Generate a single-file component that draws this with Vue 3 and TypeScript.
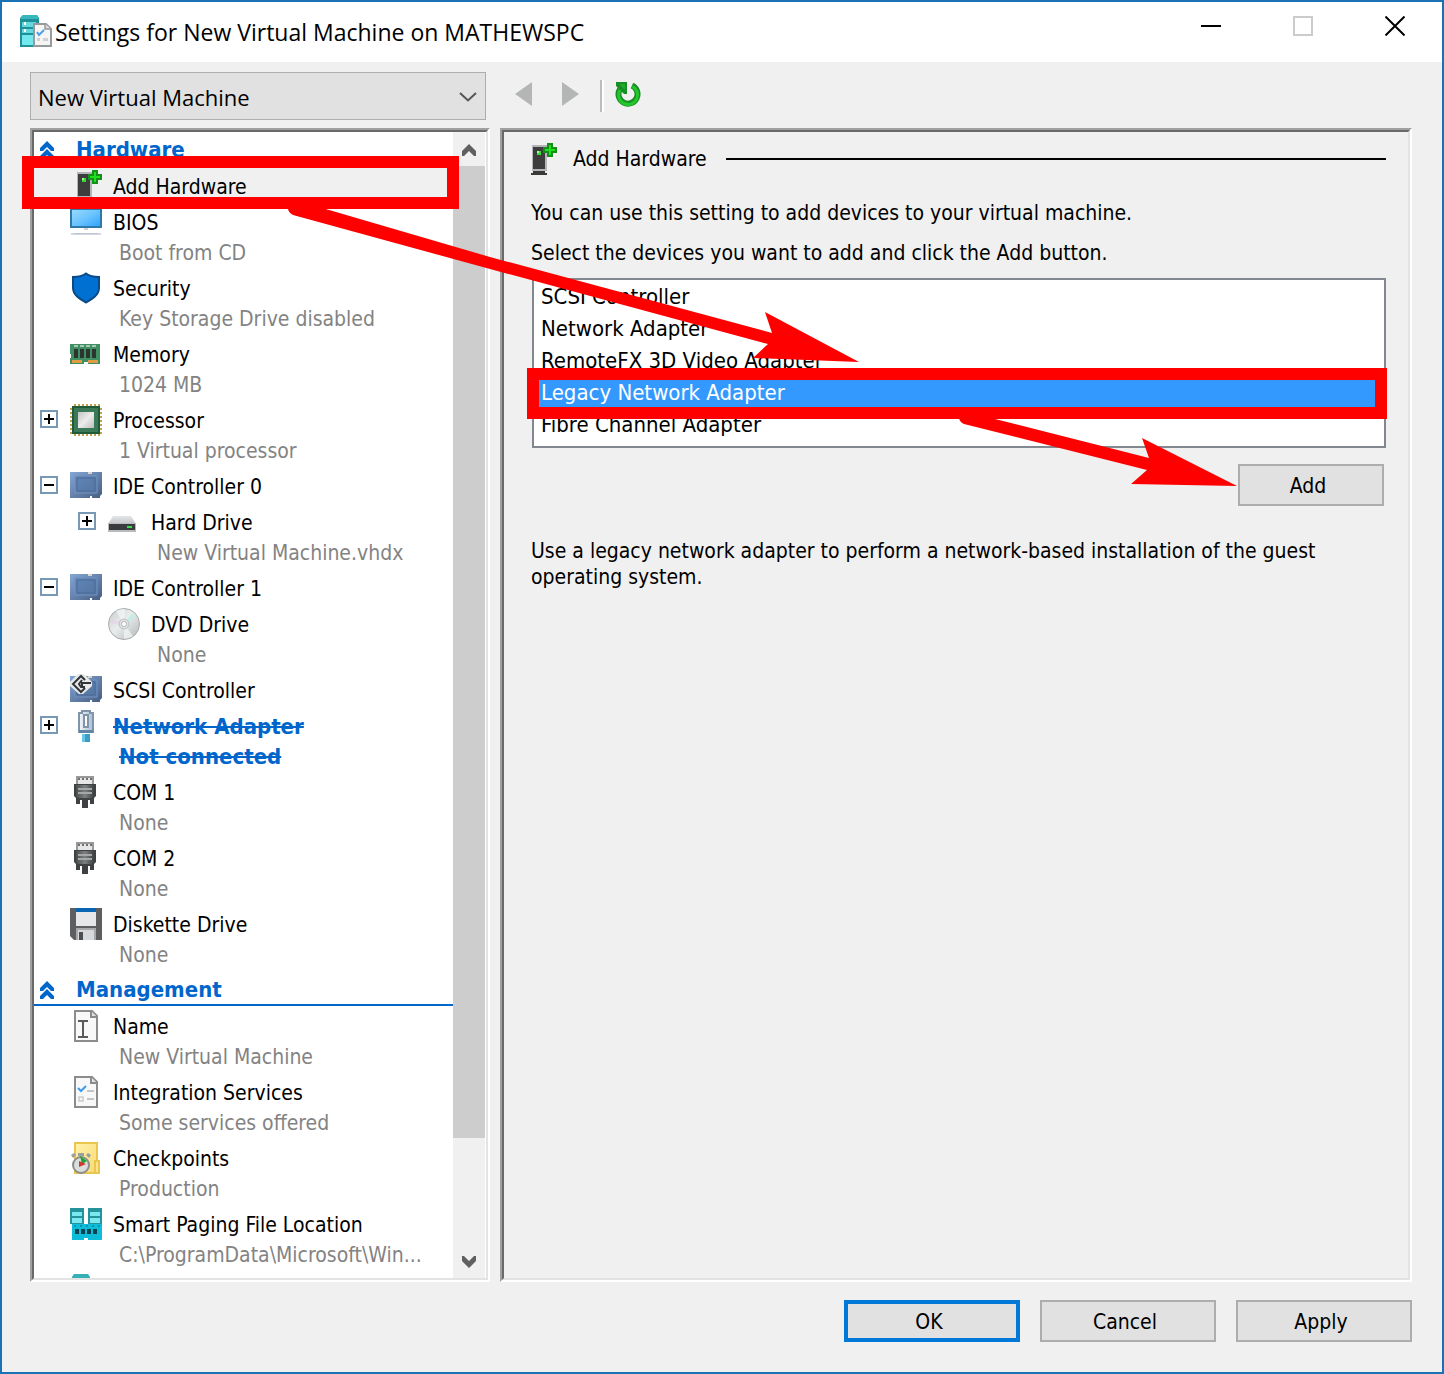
<script setup lang="ts">
import { ref } from 'vue'

interface TreeNode {
  icon: string
  name: string
  detail?: string
  level?: number
  toggle?: 'plus' | 'minus'
  changed?: boolean
}

interface Section {
  title: string
  nodes: TreeNode[]
}

const sections: Section[] = [
  {
    title: 'Hardware',
    nodes: [
      { icon: 'add-hardware', name: 'Add Hardware' },
      { icon: 'bios', name: 'BIOS', detail: 'Boot from CD' },
      { icon: 'security', name: 'Security', detail: 'Key Storage Drive disabled' },
      { icon: 'memory', name: 'Memory', detail: '1024 MB' },
      { icon: 'processor', name: 'Processor', detail: '1 Virtual processor', toggle: 'plus' },
      { icon: 'ide', name: 'IDE Controller 0', toggle: 'minus' },
      { icon: 'hard-drive', name: 'Hard Drive', detail: 'New Virtual Machine.vhdx', level: 2, toggle: 'plus' },
      { icon: 'ide', name: 'IDE Controller 1', toggle: 'minus' },
      { icon: 'dvd', name: 'DVD Drive', detail: 'None', level: 2 },
      { icon: 'scsi', name: 'SCSI Controller' },
      { icon: 'network', name: 'Network Adapter', detail: 'Not connected', toggle: 'plus', changed: true },
      { icon: 'com', name: 'COM 1', detail: 'None' },
      { icon: 'com', name: 'COM 2', detail: 'None' },
      { icon: 'diskette', name: 'Diskette Drive', detail: 'None' },
    ],
  },
  {
    title: 'Management',
    nodes: [
      { icon: 'name', name: 'Name', detail: 'New Virtual Machine' },
      { icon: 'services', name: 'Integration Services', detail: 'Some services offered' },
      { icon: 'checkpoints', name: 'Checkpoints', detail: 'Production' },
      { icon: 'paging', name: 'Smart Paging File Location', detail: 'C:\\ProgramData\\Microsoft\\Win...' },
      { icon: 'server', name: '' },
    ],
  },
]

const devices = [
  'SCSI Controller',
  'Network Adapter',
  'RemoteFX 3D Video Adapter',
  'Legacy Network Adapter',
  'Fibre Channel Adapter',
]

const machine = ref('New Virtual Machine')
const currentNode = ref('Add Hardware')
const currentDevice = ref('Legacy Network Adapter')
</script>

<template>
  <div class="window">
    <svg class="sprite" aria-hidden="true">
      <defs>
        <linearGradient id="g-screen" x1="0" y1="0" x2="1" y2="1">
          <stop offset="0" stop-color="#9bdcff" />
          <stop offset="0.5" stop-color="#6cc4ff" />
          <stop offset="1" stop-color="#2ba2fb" />
        </linearGradient>
        <linearGradient id="g-chip" x1="0" y1="0" x2="1" y2="1">
          <stop offset="0" stop-color="#c4c4c4" />
          <stop offset="0.5" stop-color="#ececec" />
          <stop offset="1" stop-color="#bdbdbd" />
        </linearGradient>
        <linearGradient id="g-card" x1="0" y1="0" x2="1" y2="1">
          <stop offset="0" stop-color="#84a7d4" />
          <stop offset="1" stop-color="#465d82" />
        </linearGradient>
        <linearGradient id="g-card-core" x1="0" y1="0" x2="1" y2="1">
          <stop offset="0" stop-color="#5f86b8" />
          <stop offset="1" stop-color="#56749f" />
        </linearGradient>
        <linearGradient id="g-disc" x1="0" y1="0" x2="1" y2="1">
          <stop offset="0" stop-color="#c9cccc" />
          <stop offset="0.45" stop-color="#e9eded" />
          <stop offset="1" stop-color="#b4b6b6" />
        </linearGradient>
        <linearGradient id="g-drive" x1="0" y1="0" x2="0" y2="1">
          <stop offset="0" stop-color="#e4e5e7" />
          <stop offset="1" stop-color="#c2c4c7" />
        </linearGradient>
        <linearGradient id="g-plug" x1="0" y1="0" x2="1" y2="0">
          <stop offset="0" stop-color="#4c4f50" />
          <stop offset="0.5" stop-color="#7d7f81" />
          <stop offset="1" stop-color="#3e4142" />
        </linearGradient>
        <linearGradient id="g-rj" x1="0" y1="0" x2="1" y2="0">
          <stop offset="0" stop-color="#f3f6f9" />
          <stop offset="1" stop-color="#a9bfd6" />
        </linearGradient>
        <linearGradient id="g-folder" x1="0" y1="0" x2="1" y2="1">
          <stop offset="0" stop-color="#fff2a8" />
          <stop offset="1" stop-color="#f9d978" />
        </linearGradient>
      </defs>

      <symbol id="add-hardware" viewBox="0 0 32 32">
        <rect x="7" y="2" width="15" height="26" fill="#b5b5b9" />
        <rect x="8" y="4" width="12" height="22" fill="#3d3d3d" />
        <rect x="12" y="8" width="4" height="4" fill="#2fe02f" />
        <rect x="12" y="8" width="2" height="2" fill="#a4ffa0" />
        <rect x="8" y="28" width="12" height="2" fill="#3c3a36" />
        <rect x="6" y="30" width="16" height="2" fill="#3c3a36" />
        <path d="M22 0h6v4h4v6h-4v4h-6v-4h-4V4h4z" fill="#12901a" />
        <path d="M24 2h2v4h4v2h-4v4h-2V8h-4V6h4z" fill="#1fe01f" />
      </symbol>

      <symbol id="bios" viewBox="0 0 32 32">
        <rect x="1" y="3" width="30" height="18" fill="url(#g-screen)" stroke="#2f78a8" stroke-width="2" />
        <rect x="14" y="22" width="4" height="2" fill="#cdd3d9" />
        <rect x="1" y="27" width="30" height="2" fill="#d3d9e4" />
        <rect x="4" y="27" width="24" height="1" fill="#bcc3ce" />
      </symbol>

      <symbol id="security" viewBox="0 0 32 32">
        <path d="M16 1.500C12 4.500 8 5 3 5v11c0 7 7 11 13 14.500C22 27 29 23 29 16V5C24 5 20 4.500 16 1.500z" fill="#0070d2" stroke="#0a4a85" stroke-width="2" />
      </symbol>

      <symbol id="memory" viewBox="0 0 32 32">
        <path d="M0 6h30v20H18v-2h-4v2H0v-6h1v-4H0z" fill="#3f8f63" />
        <path d="M4 7h4v2H4zM10 7h4v2h-4zM16 7h4v2h-4zM22 7h4v2h-4z" fill="#a9c9b6" />
        <path d="M4 11h4v9H4zM10 11h4v9h-4zM16 11h4v9h-4zM22 11h4v9h-4z" fill="#2b3431" />
        <path d="M2 22h10v3H2zM18 22h10v3H18z" fill="#df9c42" />
      </symbol>

      <symbol id="processor" viewBox="0 0 32 32">
        <path d="M4 1h26M4 31h26" stroke="#c2a14c" stroke-width="2" stroke-dasharray="2 2" />
        <path d="M1 4v26M31 4v26" stroke="#c2a14c" stroke-width="2" stroke-dasharray="2 2" />
        <rect x="3" y="3" width="26" height="26" fill="#3b7857" stroke="#1f5b3b" stroke-width="2" />
        <rect x="8" y="8" width="16" height="16" fill="url(#g-chip)" />
      </symbol>

      <symbol id="ide" viewBox="0 0 32 32">
        <path d="M0 2h32v22l-2 2v2h-8v-2h-2v2H0z" fill="url(#g-card)" />
        <path d="M18 2h4v2h-4z" fill="#d8d5cc" />
        <path d="M5 6h22v17H5z" fill="url(#g-card-core)" stroke="#7393be" stroke-width="1" />
        <path d="M7 8h18v13H7z" fill="none" stroke="#4b6a97" stroke-width="1" />
      </symbol>

      <symbol id="scsi" viewBox="0 0 32 32">
        <use href="#ide" />
        <path d="M8 0h6l8 8v4l-9 8H9l-9-8V8z" fill="#e9e9e7" />
        <path d="M15 6l-4-4-8 8 8 8 4-4M21 9h-9v4M15 13h-4l-2-3 3-4" fill="none" stroke="#30353b" stroke-width="2" />
      </symbol>

      <symbol id="hard-drive" viewBox="0 0 32 32">
        <path d="M5 10h18l5 8H0z" fill="url(#g-drive)" />
        <rect x="0" y="17" width="28" height="9" fill="#b9bbbd" />
        <rect x="1" y="18" width="26" height="6" fill="#3a3b3c" />
        <rect x="19" y="20" width="5" height="2" fill="#34e04e" />
      </symbol>

      <symbol id="dvd" viewBox="0 0 32 32">
        <circle cx="16" cy="16" r="15.500" fill="url(#g-disc)" stroke="#a9abab" />
        <path d="M16 16L8 3a15 15 0 0 1 9-2zM16 16l9 12a15 15 0 0 1-9 3z" fill="#f4f7f7" opacity="0.700" />
        <path d="M18 13l6-8 3 3-7 7z" fill="#b6f0e4" opacity="0.700" />
        <path d="M3 11l9 3v3l-10-2z" fill="#eccdea" opacity="0.500" />
        <circle cx="16" cy="16" r="5" fill="#dfe0e0" stroke="#c1c3c3" />
        <circle cx="16" cy="16" r="2.500" fill="#fff" stroke="#b6b8b8" />
      </symbol>

      <symbol id="network" viewBox="0 0 32 32">
        <path d="M9 3h3V1h8v2h3v19H9z" fill="url(#g-rj)" stroke="#8195aa" stroke-width="2" />
        <path d="M14 5h4v12h-4z" fill="#fff" stroke="#8195aa" stroke-width="2" />
        <path d="M9 20h14v3H9z" fill="#5f84a8" />
        <path d="M12 24h8v8h-8z" fill="#3b9cc7" />
        <path d="M12 24h3v8h-3z" fill="#67c6e4" />
      </symbol>

      <symbol id="com" viewBox="0 0 32 32">
        <path d="M6 0h18v8H6z" fill="#98999b" />
        <path d="M8 2h14v6H8z" fill="#e6e6e6" />
        <path d="M8 2h2v2H8zM12 2h2v2h-2zM16 2h2v2h-2zM20 2h2v2h-2z" fill="#6f7072" />
        <path d="M4 8h22v12l-2 2v6h-4v-4h-2v8h-6v-8h-2v4H6v-6l-2-2z" fill="#3f4243" />
        <path d="M6 9h18v11l-2 2H8l-2-2z" fill="url(#g-plug)" />
        <path d="M8 13h14M8 17h14" stroke="#a5a7a9" stroke-width="2" />
      </symbol>

      <symbol id="diskette" viewBox="0 0 32 32">
        <path d="M0 0h32v32H4l-4-4z" fill="#5d5e60" />
        <path d="M6 4h20v14H6z" fill="#e6e7e9" />
        <path d="M6 0h20v4H6z" fill="#0a64b4" />
        <path d="M6 20h20v12H6z" fill="#a7a9ab" />
        <path d="M8 22h16v10H8z" fill="#d8d9da" />
        <path d="M9 24h4v8H9z" fill="#4d4e50" />
      </symbol>

      <symbol id="name" viewBox="0 0 32 32">
        <path d="M5 1h17l5 5v25H5z" fill="#f8f8f8" stroke="#8a8c8d" stroke-width="2" />
        <path d="M21 1v6h6" fill="#e2e2e2" stroke="#8a8c8d" stroke-width="2" />
        <path d="M8 11h4l1 1 1-1h4M13 12v15M8 27h4l1-1 1 1h4" fill="none" stroke="#5a5a5a" stroke-width="2" />
      </symbol>

      <symbol id="services" viewBox="0 0 32 32">
        <path d="M5 1h17l5 5v25H5z" fill="#f8f8f8" stroke="#8a8c8d" stroke-width="2" />
        <path d="M21 1v6h6" fill="#e2e2e2" stroke="#8a8c8d" stroke-width="2" />
        <path d="M8 12l3 3 5-5" fill="none" stroke="#3d9bea" stroke-width="2" />
        <path d="M17 15h7M17 23h7" stroke="#c3c4c5" stroke-width="2" />
        <path d="M9 21h4v4H9z" fill="none" stroke="#c9cacb" stroke-width="1.500" />
      </symbol>

      <symbol id="checkpoints" viewBox="0 0 32 32">
        <path d="M5 1h22v30H5z" fill="url(#g-folder)" stroke="#e9c64c" stroke-width="2" />
        <path d="M25 19h4v12h-4z" fill="#fbe391" stroke="#e9c64c" stroke-width="2" />
        <path d="M8 11h6v3H8zM1 13l3-2 2 2-3 3zM16 13l2-2 3 2-2 3z" fill="#9b9d9e" />
        <circle cx="11" cy="23" r="8" fill="#dcdddd" stroke="#8b8d8e" stroke-width="2" />
        <path d="M10 14l7 5-5 3z" fill="#1ea432" />
        <path d="M9 19l7 3-7 3z" fill="#d3372e" />
      </symbol>

      <symbol id="paging" viewBox="0 0 32 32">
        <path d="M0 0h14v16H0zM18 0h14v16H18z" fill="#25939c" />
        <path d="M2 4h10v4H2zM2 10h10v5H2zM20 4h10v4H20zM20 10h10v5H20z" fill="#7be7ee" />
        <path d="M2 16h30v16H18v-2h-4v2H2z" fill="#0cbcd9" />
        <path d="M4 17h2v2H4zM10 17h2v2h-2zM16 17h2v2h-2zM22 17h2v2h-2zM28 17h2v2h-2z" fill="#0a96b2" />
        <path d="M5 21h4v5H5zM11 21h4v5h-4zM17 21h4v5h-4zM23 21h4v5h-4z" fill="#0c4350" />
      </symbol>

      <symbol id="server" viewBox="0 0 32 32">
        <path d="M4 0h14l2 3v29H2V3z" fill="#35b1b5" />
        <path d="M4 7h14v5H4zM4 14h14v4H4z" fill="#6de4ec" />
      </symbol>

      <symbol id="settings" viewBox="0 0 32 32">
        <path d="M3 0h14l2 3v29H0V3z" fill="#1f8f98" />
        <path d="M3 0h14l2 4H0z" fill="#35b7bb" />
        <path d="M2 7h14v5H2zM2 14h14v4H2z" fill="#63d9df" />
        <path d="M2 20h14v10H2z" fill="#74e8ef" />
        <path d="M4 7h2v3H4zM4 14h2v3H4z" fill="#fff" />
        <path d="M14 9h12l5 5v17H14z" fill="#f5f5f6" stroke="#97999b" stroke-width="2" />
        <path d="M25 9v5h6" fill="#dcdcdd" stroke="#97999b" stroke-width="1.500" />
        <path d="M17 17l2 3 5-5" fill="none" stroke="#4a9eea" stroke-width="2" />
        <path d="M17 23h3v3h-3zM23 23h5v3h-5z" fill="#cfd1d2" />
      </symbol>
    </svg>

    <header class="titlebar">
      <svg class="app-icon" aria-hidden="true"><use href="#settings" /></svg>
      <h1>Settings for New Virtual Machine on MATHEWSPC</h1>
      <div class="caption-buttons">
        <button type="button" aria-label="Minimize">
          <svg viewBox="0 0 20 20"><path d="M0 10h20" stroke="#000" stroke-width="2" /></svg>
        </button>
        <button type="button" aria-label="Maximize" disabled>
          <svg viewBox="0 0 20 20"><path d="M1 1h18v18H1z" fill="none" stroke="#ccc" stroke-width="2" /></svg>
        </button>
        <button type="button" aria-label="Close">
          <svg viewBox="0 0 20 20"><path d="M0.500 0.500l19 19M19.500 0.500l-19 19" stroke="#000" stroke-width="2" /></svg>
        </button>
      </div>
    </header>

    <nav class="toolbar" aria-label="Virtual machine">
      <div class="machine">
        <select v-model="machine" aria-label="Virtual machine">
          <option>New Virtual Machine</option>
        </select>
        <svg viewBox="0 0 18 10" aria-hidden="true"><path d="M1 1l8 7.500L17 1" fill="none" stroke="#555" stroke-width="2" /></svg>
      </div>
      <button class="nav-button" type="button" aria-label="Back" disabled>
        <svg viewBox="0 0 18 24"><path d="M17 0v24L0 12z" fill="#b4b6b6" /></svg>
      </button>
      <button class="nav-button" type="button" aria-label="Forward" disabled>
        <svg viewBox="0 0 18 24"><path d="M0 0v24l17-12z" fill="#b4b6b6" /></svg>
      </button>
      <span class="divider"></span>
      <button class="refresh" type="button" aria-label="Refresh">
        <svg viewBox="0 0 26 26">
          <path d="M17 4.500A9.500 9.500 0 1 1 5 8" fill="none" stroke="#178f24" stroke-width="6" />
          <path d="M1 1h11v12H9L1 5z" fill="#178f24" />
          <path d="M17.500 5.500A9.500 9.500 0 1 1 5 9" fill="none" stroke="#24c62c" stroke-width="3" />
          <path d="M4 3h6v6z" fill="#24a82e" />
        </svg>
      </button>
    </nav>

    <main class="panes">
      <section class="pane tree-pane">
        <div class="pane-inner tree-frame">
          <div class="tree">
            <template v-for="section in sections" :key="section.title">
              <h2>
                <svg viewBox="0 0 14 18" aria-hidden="true">
                  <path d="M7 0l7 7v3h-3L7 6l-4 4H0V7zM7 8l7 7v3h-3l-4-4-4 4H0v-3z" fill="#0066cc" />
                </svg>
                {{ section.title }}
              </h2>
              <ul>
                <li
                  v-for="(node, i) in section.nodes"
                  :key="i"
                  :class="{ nested: node.level === 2, current: node.name === currentNode, changed: node.changed }"
                  @click="currentNode = node.name"
                >
                  <button v-if="node.toggle" class="toggle" type="button" :aria-label="node.toggle === 'plus' ? 'Expand' : 'Collapse'">
                    <svg viewBox="0 0 18 18">
                      <path d="M1 1h16v16H1z" fill="#fff" stroke="#7898b5" stroke-width="2" />
                      <path d="M4 9h10" stroke="#000" stroke-width="2" />
                      <path v-if="node.toggle === 'plus'" d="M9 4v10" stroke="#000" stroke-width="2" />
                    </svg>
                  </button>
                  <span v-else class="toggle"></span>
                  <svg class="node-icon" aria-hidden="true"><use :href="'#' + node.icon" /></svg>
                  <div class="node-text">
                    <span class="node-name">{{ node.name }}</span>
                    <span v-if="node.detail" class="node-detail">{{ node.detail }}</span>
                  </div>
                </li>
              </ul>
            </template>
          </div>
          <div class="scrollbar">
            <button class="scroll-up" type="button" aria-label="Scroll up">
              <svg viewBox="0 0 14 12"><path d="M7 0l7 7v5h-2L7 7l-5 5H0V7z" fill="#606060" /></svg>
            </button>
            <div class="track"><div class="thumb"></div></div>
            <button class="scroll-down" type="button" aria-label="Scroll down">
              <svg viewBox="0 0 14 12"><path d="M7 12l7-7V0h-2L7 5 2 0H0v5z" fill="#606060" /></svg>
            </button>
          </div>
        </div>
      </section>

      <section class="pane detail-pane">
        <div class="pane-inner detail">
          <div class="detail-head">
            <svg viewBox="6 0 32 32" aria-hidden="true"><use href="#add-hardware" width="32" height="32" /></svg>
            <h2>Add Hardware</h2>
            <hr />
          </div>
          <p class="intro">You can use this setting to add devices to your virtual machine.</p>
          <p class="prompt">Select the devices you want to add and click the Add button.</p>
          <ul class="devices" role="listbox" aria-label="Devices">
            <li
              v-for="device in devices"
              :key="device"
              role="option"
              :aria-selected="device === currentDevice"
              :class="{ selected: device === currentDevice }"
              @click="currentDevice = device"
            >{{ device }}</li>
          </ul>
          <button class="button add" type="button">Add</button>
          <p class="hint">Use a legacy network adapter to perform a network-based installation of the guest operating system.</p>
        </div>
      </section>
    </main>

    <footer class="actions">
      <button class="button default" type="button">OK</button>
      <button class="button" type="button">Cancel</button>
      <button class="button" type="button">Apply</button>
    </footer>

    <svg class="markup" width="1444" height="600" viewBox="0 0 1444 600" aria-hidden="true">
      <rect x="28" y="162" width="425" height="41" fill="none" stroke="#f00" stroke-width="12" />
      <rect x="533" y="374" width="848" height="39" fill="none" stroke="#f00" stroke-width="12" />
      <path d="M288 205h24L490 257l282 76-7-21 94 50-106-4 15-14-278-75-197-54q-6-3-5-10z" fill="#f00" />
      <path d="M959 415h20l170 43-7-20 95 48-106-2 16-14-183-46q-6-3-5-9z" fill="#f00" />
    </svg>
  </div>
</template>

<style>
html,
body {
  margin: 0;
}
</style>

<style scoped>
* {
  box-sizing: border-box;
}

.window {
  position: relative;
  display: flex;
  flex-direction: column;
  height: 100vh;
  min-width: 900px;
  overflow: hidden;
  border: 2px solid #1a72b5;
  background: #f0f0f0;
  color: #000;
  font: 21px/30px "DejaVu Sans Condensed", "DejaVu Sans", sans-serif;
}

h1,
h2,
p,
ul {
  margin: 0;
  padding: 0;
  font-weight: normal;
  list-style: none;
}

button {
  padding: 0;
  border: 0;
  background: none;
  color: inherit;
  font: inherit;
}

svg {
  display: block;
  flex: none;
}

.sprite {
  position: absolute;
  width: 0;
  height: 0;
}

.titlebar {
  display: flex;
  flex: none;
  height: 60px;
  padding: 0 1px 0 18px;
  background: #fff;
}

.app-icon {
  width: 32px;
  height: 32px;
  margin-top: 13px;
}

.titlebar h1 {
  flex: 1;
  padding-left: 3px;
  font: 23px/60px "Open Sans", "Noto Sans", sans-serif;
  white-space: nowrap;
}

.caption-buttons {
  display: flex;
}

.caption-buttons button {
  display: flex;
  align-items: center;
  justify-content: center;
  width: 92px;
  height: 48px;
}

.caption-buttons svg {
  width: 20px;
  height: 20px;
}

.toolbar {
  display: flex;
  flex: none;
  align-items: flex-start;
  height: 66px;
  padding: 10px 28px 0;
}

.machine {
  position: relative;
  width: 456px;
  height: 48px;
}

.machine select {
  width: 100%;
  height: 100%;
  padding: 2px 7px 0;
  border: 1px solid #adadad;
  border-radius: 0;
  background: #e1e1e1;
  color: #000;
  font: 22px/44px "Open Sans", "Noto Sans", sans-serif;
  appearance: none;
}

.machine svg {
  position: absolute;
  top: 20px;
  right: 9px;
  width: 18px;
  height: 10px;
  pointer-events: none;
}

.nav-button {
  width: 18px;
  height: 24px;
  margin: 10px 0 0 29px;
}

.nav-button svg {
  width: 18px;
  height: 24px;
}

.divider {
  width: 4px;
  height: 32px;
  margin: 8px 11px 0 20px;
  border-right: 2px solid #fff;
  border-left: 2px solid #bcbcbc;
}

.refresh {
  margin-top: 9px;
}

.refresh svg {
  width: 26px;
  height: 26px;
}

.panes {
  display: flex;
  flex: 1;
  gap: 10px;
  min-height: 0;
  padding: 0 30px 0 28px;
}

.pane {
  display: flex;
  border: 2px solid;
  border-color: #a0a0a0 #fff #fff #a0a0a0;
}

.pane-inner {
  flex: 1;
  min-width: 0;
  border: 2px solid;
  border-color: #696969 #e3e3e3 #e3e3e3 #696969;
}

.tree-pane {
  flex: none;
  width: 460px;
}

.tree-frame {
  display: flex;
  padding-right: 1px;
  background: #fff;
}

.tree {
  flex: 1;
  min-width: 0;
  overflow: hidden;
}

.tree h2 {
  display: flex;
  align-items: center;
  gap: 22px;
  height: 34px;
  margin-bottom: 2px;
  padding: 4px 0 0 6px;
  border-bottom: 2px solid #0066cc;
  color: #0066cc;
  font-size: 22px;
  font-weight: bold;
}

.tree h2 svg {
  width: 14px;
  height: 18px;
}

.tree li {
  display: flex;
  padding-left: 6px;
  white-space: nowrap;
}

.tree li.nested {
  padding-left: 44px;
}

.tree li.current {
  background: #f0f0f0;
}

.toggle {
  flex: none;
  width: 18px;
  height: 18px;
  margin: 8px 12px 0 0;
}

.node-icon {
  width: 32px;
  height: 32px;
  margin: 2px 11px 2px 0;
}

.node-text {
  display: flex;
  flex-direction: column;
  padding: 4px 0 2px;
}

.node-name {
  height: 30px;
}

.node-detail {
  padding-left: 6px;
  color: #838383;
}

.changed .node-text {
  color: #0066cc;
  font-size: 22px;
  font-weight: bold;
  text-decoration: line-through;
}

.changed .node-detail {
  color: #0066cc;
}

.scrollbar {
  display: flex;
  flex: none;
  flex-direction: column;
  width: 32px;
  background: #f0f0f0;
}

.scrollbar button {
  display: flex;
  align-items: center;
  justify-content: center;
}

.scrollbar .scroll-up {
  height: 34px;
  padding-top: 2px;
}

.scrollbar .scroll-down {
  height: 32px;
}

.scrollbar svg {
  width: 14px;
  height: 12px;
}

.track {
  flex: 1;
}

.thumb {
  height: 90%;
  background: #cdcdcd;
}

.detail-pane {
  flex: 1;
  min-width: 0;
}

.detail {
  padding: 11px 22px 0 27px;
  line-height: 26px;
}

.detail-head {
  display: flex;
  align-items: center;
  height: 31px;
}

.detail-head svg {
  width: 32px;
  height: 32px;
}

.detail-head h2 {
  padding: 0 19px 0 10px;
  font-size: 21px;
}

.detail-head hr {
  flex: 1;
  height: 2px;
  margin: 0;
  border: 0;
  background: #000;
}

.intro {
  margin-top: 26px;
}

.prompt {
  margin: 14px 0 12px;
}

.devices {
  margin-left: 1px;
  padding: 1px 0 5px;
  border: 2px solid #828790;
  background: #fff;
}

.devices li {
  height: 32px;
  padding-left: 7px;
  font-size: 22px;
  line-height: 32px;
}

.devices li.selected {
  background: #3399ff;
  color: #fff;
}

.button {
  width: 176px;
  height: 42px;
  padding: 2px 6px 0 0;
  border: 2px solid #adadad;
  background: #e1e1e1;
}

.button.default {
  border: 4px solid #0078d7;
}

.button.add {
  display: block;
  width: 146px;
  margin: 16px 2px 0 auto;
}

.hint {
  margin-top: 32px;
}

.actions {
  display: flex;
  flex: none;
  justify-content: flex-end;
  gap: 20px;
  padding: 18px 30px 30px;
}

.markup {
  position: absolute;
  top: -2px;
  left: -2px;
  pointer-events: none;
}
</style>
